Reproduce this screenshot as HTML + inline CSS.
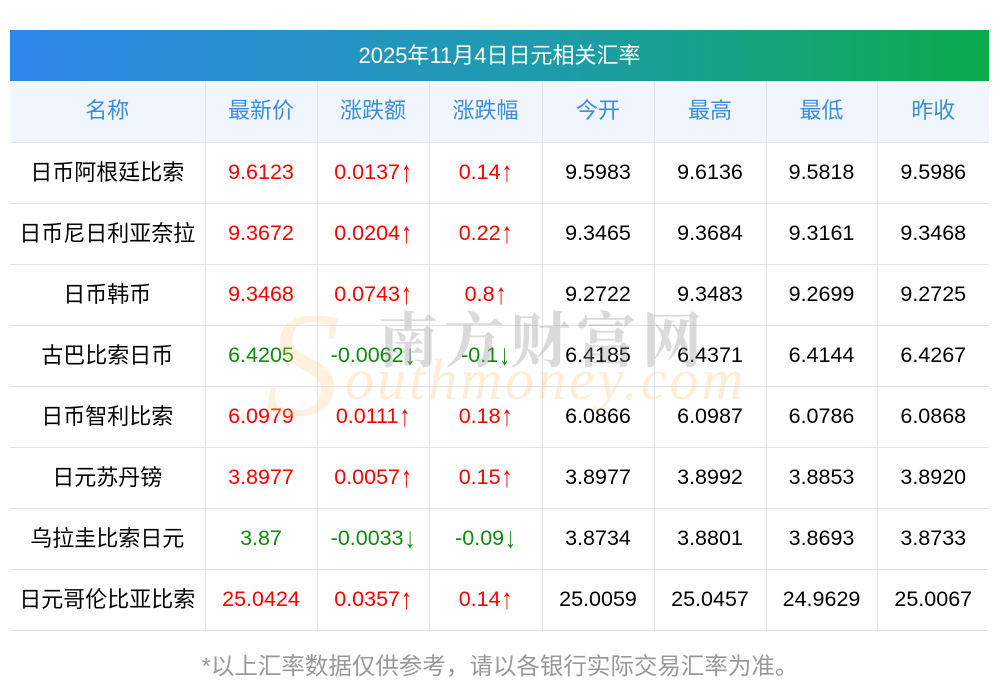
<!DOCTYPE html>
<html><head><meta charset="utf-8"><style>
*{margin:0;padding:0;box-sizing:border-box}
body{width:1000px;height:697px;background:#fff;font-family:"Liberation Sans","Noto Sans CJK SC",sans-serif;position:relative;overflow:hidden}
.title{position:absolute;left:10px;top:30px;width:979px;height:51px;background:linear-gradient(90deg,#2f87ea,#1e9cab 55%,#0bab4c);color:#fff;font-size:22px;text-align:center;line-height:51px}
table{position:absolute;left:10px;top:81px;width:979px;border-collapse:collapse;table-layout:fixed}
td,th{height:61px;text-align:center;font-size:21.5px;line-height:24px;font-weight:normal;border:1px solid #dfe3ec;border-top:none;padding-bottom:1px;vertical-align:middle}
td:first-child,th{font-size:22px}
td:first-child{padding-bottom:0}
tr td:first-child,tr th:first-child{border-left:none}
tr td:last-child,tr th:last-child{border-right:none}
th{background:#f1f6fe;color:#3a8de0;padding-bottom:0}
.r{color:#f00}.g{color:#108a10}
.a{display:inline-block;transform:scaleY(1.35);font-family:"Liberation Sans",sans-serif;margin-left:1px}
.wm1{position:absolute;left:378px;top:294px;font-size:60px;color:rgba(150,150,150,.35);letter-spacing:6px;font-family:"Noto Serif CJK SC",serif;font-weight:bold}
.wm2{position:absolute;left:345px;top:346px;font-size:58px;color:rgba(255,200,120,.3);font-style:italic;font-family:"Liberation Serif",serif;letter-spacing:3px}
.wmS{position:absolute;left:265px;top:290px;font-size:150px;color:rgba(255,200,120,.25);font-style:italic;font-family:"Liberation Serif",serif;line-height:1}
.foot{position:absolute;top:647px;left:0;width:1000px;text-align:center;font-size:23.5px;color:#999}
</style></head><body>
<div class="title">2025年11月4日日元相关汇率</div>
<table>
<colgroup><col style="width:195px"><col style="width:112px"><col style="width:112px"><col style="width:113px"><col style="width:112px"><col style="width:112px"><col style="width:111px"><col style="width:112px"></colgroup>
<tr><th>名称</th><th>最新价</th><th>涨跌额</th><th>涨跌幅</th><th>今开</th><th>最高</th><th>最低</th><th>昨收</th></tr>
<tr><td>日币阿根廷比索</td><td class="r">9.6123</td><td class="r">0.0137<span class="a">↑</span></td><td class="r">0.14<span class="a">↑</span></td><td>9.5983</td><td>9.6136</td><td>9.5818</td><td>9.5986</td></tr>
<tr><td>日币尼日利亚奈拉</td><td class="r">9.3672</td><td class="r">0.0204<span class="a">↑</span></td><td class="r">0.22<span class="a">↑</span></td><td>9.3465</td><td>9.3684</td><td>9.3161</td><td>9.3468</td></tr>
<tr><td>日币韩币</td><td class="r">9.3468</td><td class="r">0.0743<span class="a">↑</span></td><td class="r">0.8<span class="a">↑</span></td><td>9.2722</td><td>9.3483</td><td>9.2699</td><td>9.2725</td></tr>
<tr><td>古巴比索日币</td><td class="g">6.4205</td><td class="g">-0.0062<span class="a">↓</span></td><td class="g">-0.1<span class="a">↓</span></td><td>6.4185</td><td>6.4371</td><td>6.4144</td><td>6.4267</td></tr>
<tr><td>日币智利比索</td><td class="r">6.0979</td><td class="r">0.0111<span class="a">↑</span></td><td class="r">0.18<span class="a">↑</span></td><td>6.0866</td><td>6.0987</td><td>6.0786</td><td>6.0868</td></tr>
<tr><td>日元苏丹镑</td><td class="r">3.8977</td><td class="r">0.0057<span class="a">↑</span></td><td class="r">0.15<span class="a">↑</span></td><td>3.8977</td><td>3.8992</td><td>3.8853</td><td>3.8920</td></tr>
<tr><td>乌拉圭比索日元</td><td class="g">3.87</td><td class="g">-0.0033<span class="a">↓</span></td><td class="g">-0.09<span class="a">↓</span></td><td>3.8734</td><td>3.8801</td><td>3.8693</td><td>3.8733</td></tr>
<tr><td>日元哥伦比亚比索</td><td class="r">25.0424</td><td class="r">0.0357<span class="a">↑</span></td><td class="r">0.14<span class="a">↑</span></td><td>25.0059</td><td>25.0457</td><td>24.9629</td><td>25.0067</td></tr>
</table>
<div class="wmS">S</div>
<div class="wm1">南方财富网</div>
<div class="wm2">outhmoney.com</div>
<div class="foot">*以上汇率数据仅供参考，请以各银行实际交易汇率为准。</div>
</body></html>
